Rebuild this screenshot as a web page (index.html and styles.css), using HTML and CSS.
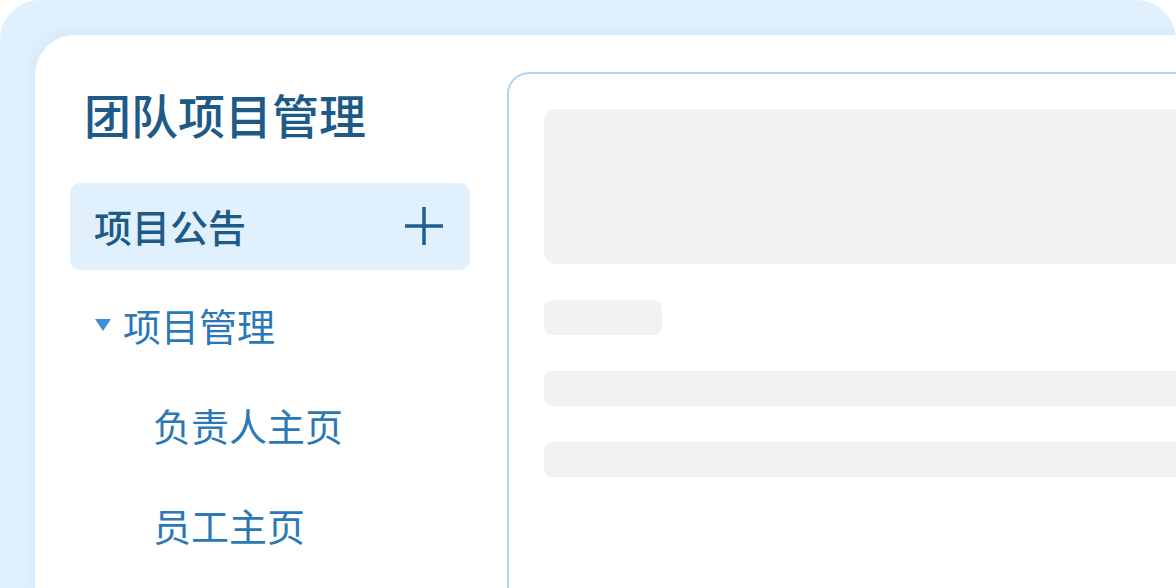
FILE: index.html
```html
<!DOCTYPE html>
<html lang="zh-CN">
<head>
  <meta charset="UTF-8" />
  <meta name="viewport" content="width=device-width, initial-scale=1.0" />
  <title>团队项目管理</title>
  <link rel="stylesheet" href="styles.css">
</head>
<body>
  <div class="frame">
    <div class="card">
      <!-- Sidebar -->
      <aside class="sidebar">
        <h1 class="title">团队项目管理</h1>
        <div class="nav-item active">
          <span>项目公告</span>
          <svg class="plus" width="38" height="38" viewBox="0 0 38 38">
            <path d="M19 0 V38 M0 19 H38" stroke="#1f5e92" stroke-width="3.5" fill="none" />
          </svg>
        </div>
        <div class="nav-item group">
          <span class="caret"></span>
          <span>项目管理</span>
        </div>
        <div class="nav-item sub">负责人主页</div>
        <div class="nav-item sub">员工主页</div>
      </aside>

      <!-- Content placeholder -->
      <section class="panel">
        <div class="skeleton hero"></div>
        <div class="skeleton short"></div>
        <div class="skeleton line"></div>
        <div class="skeleton line"></div>
      </section>
    </div>
  </div>
</body>
</html>
```

FILE: styles.css
```css
/* Base */
body {
  margin: 0;
  background: #fff;
  font-family: "Noto Sans CJK SC", "Noto Sans", sans-serif;
}

.frame {
  width: 1176px;
  height: 588px;
  background: #e0f0fc;
  border-radius: 40px 40px 0 0;
  overflow: hidden;
  padding: 35px 0 0 35px;
  box-sizing: border-box;
}

.card {
  width: 1300px;
  height: 100%;
  background: #fff;
  border-radius: 40px 0 0 0;
  box-shadow: 0 0 18px rgba(40, 110, 170, 0.08);
  display: flex;
}

/* Sidebar */
.sidebar {
  width: 472px;
  flex-shrink: 0;
  padding: 56px 37px 0 35px;
  box-sizing: border-box;
}

.title {
  margin: 0 0 46px 14px;
  font-size: 47px;
  line-height: 46px;
  font-weight: 500;
  color: #1d5a87;
}

.nav-item {
  display: flex;
  align-items: center;
  height: 100px;
  padding-bottom: 7px;
  box-sizing: border-box;
  font-size: 38px;
  color: #2a79b6;
}

.nav-item.active {
  height: 87px;
  margin-bottom: 8px;
  padding: 0 27px 2px 24px;
  background: #e0f0fc;
  border-radius: 10px;
  justify-content: space-between;
  font-weight: 500;
  color: #1d5a87;
}

.nav-item.group {
  padding-left: 25px;
}

.caret {
  width: 0;
  height: 0;
  border-left: 8px solid transparent;
  border-right: 8px solid transparent;
  border-top: 12px solid #3a8fd6;
  margin-right: 12px;
}

.nav-item.sub {
  padding-left: 83px;
}

/* Right panel */
.panel {
  flex: 1;
  margin-top: 37px;
  border-top: 2px solid #a8d8f8;
  border-left: 2px solid #a8d8f8;
  border-radius: 22px 0 0 0;
  padding: 35px 35px 0 35px;
  display: flex;
  flex-direction: column;
  gap: 36px;
}

.skeleton {
  background: #f2f2f2;
  border-radius: 8px;
  height: 35px;
}

.skeleton.hero {
  height: 155px;
  border-radius: 12px;
}

.skeleton.short {
  width: 118px;
}
```
